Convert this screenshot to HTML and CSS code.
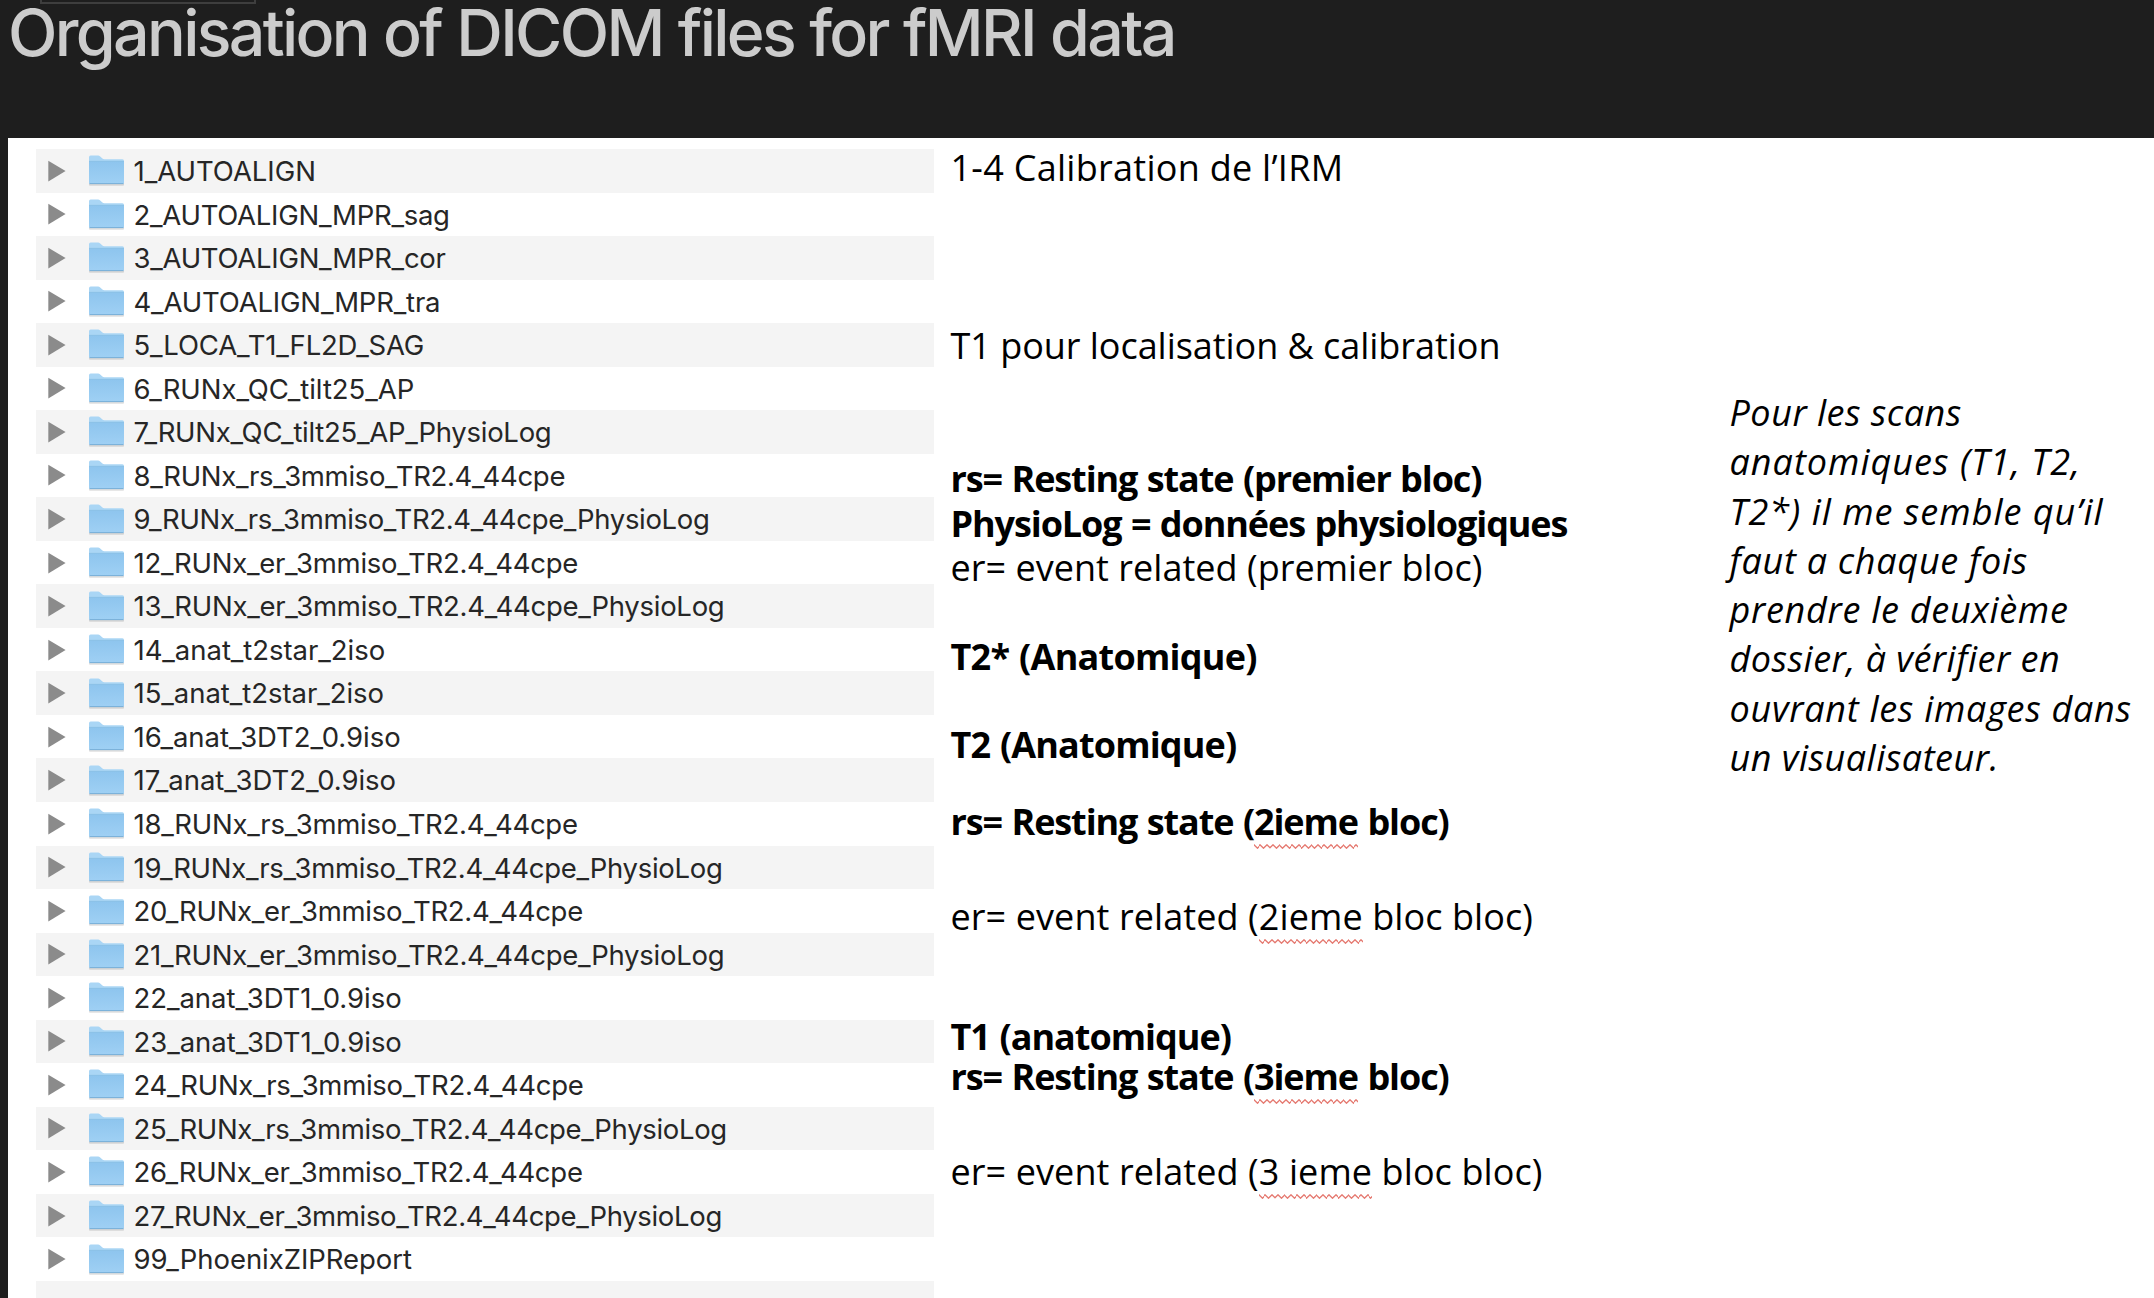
FILE: index.html
```
<!DOCTYPE html>
<html lang="fr">
<head>
<meta charset="utf-8">
<title>Organisation of DICOM files for fMRI data</title>
<link rel="stylesheet" href="styles.css">
</head>
<body>
<svg class="defs" width="0" height="0" aria-hidden="true">
  <defs>
    <linearGradient id="front" x1="0" y1="0" x2="0" y2="1">
      <stop offset="0" stop-color="#8ec5ee"/>
      <stop offset="1" stop-color="#9fd0f4"/>
    </linearGradient>
    <symbol id="arrow" viewBox="0 0 18 22"><path d="M.3.8 17.6 11 .3 21.4z" fill="#8b8b8b"/></symbol>
    <symbol id="folder" viewBox="0 0 37 33">
      <path d="M1 29.6h35v1.2a1 1 0 0 1-1 1H2a1 1 0 0 1-1-1z" fill="#000" opacity=".13"/>
      <path d="M1 3.2Q1 1.6 2.6 1.6H10q1.3 0 2.2.9l2.2 2.1q.8.7 2 .7H34.400q1.600 0 1.600 1.600V29H1z" fill="#aad6f5"/>
      <path d="M1 7.600h35V28.600q0 1.400-1.400 1.400H2.400Q1 30 1 28.600z" fill="url(#front)"/>
      <path d="M1 7.400h35" stroke="#86bce5" stroke-width=".8"/>
      <path d="M1.500 29.600h34" stroke="#79afd8" stroke-width="1"/>
    </symbol>
  </defs>
</svg>
<header class="header">
  <div class="tab-edge"></div>
  <h1 class="title">Organisation of DICOM files for fMRI data</h1>
</header>
<main class="slide">
  <ul class="files">
    <li class="file"><svg class="arrow"><use href="#arrow"/></svg><svg class="folder"><use href="#folder"/></svg><span class="name name--wide">1_AUTOALIGN</span></li>
    <li class="file"><svg class="arrow"><use href="#arrow"/></svg><svg class="folder"><use href="#folder"/></svg><span class="name">2_AUTOALIGN_MPR_sag</span></li>
    <li class="file"><svg class="arrow"><use href="#arrow"/></svg><svg class="folder"><use href="#folder"/></svg><span class="name">3_AUTOALIGN_MPR_cor</span></li>
    <li class="file"><svg class="arrow"><use href="#arrow"/></svg><svg class="folder"><use href="#folder"/></svg><span class="name name--medium">4_AUTOALIGN_MPR_tra</span></li>
    <li class="file"><svg class="arrow"><use href="#arrow"/></svg><svg class="folder"><use href="#folder"/></svg><span class="name name--medium">5_LOCA_T1_FL2D_SAG</span></li>
    <li class="file"><svg class="arrow"><use href="#arrow"/></svg><svg class="folder"><use href="#folder"/></svg><span class="name name--wide">6_RUNx_QC_tilt25_AP</span></li>
    <li class="file"><svg class="arrow"><use href="#arrow"/></svg><svg class="folder"><use href="#folder"/></svg><span class="name">7_RUNx_QC_tilt25_AP_PhysioLog</span></li>
    <li class="file"><svg class="arrow"><use href="#arrow"/></svg><svg class="folder"><use href="#folder"/></svg><span class="name name--tight">8_RUNx_rs_3mmiso_TR2.4_44cpe</span></li>
    <li class="file"><svg class="arrow"><use href="#arrow"/></svg><svg class="folder"><use href="#folder"/></svg><span class="name name--tight">9_RUNx_rs_3mmiso_TR2.4_44cpe_PhysioLog</span></li>
    <li class="file"><svg class="arrow"><use href="#arrow"/></svg><svg class="folder"><use href="#folder"/></svg><span class="name">12_RUNx_er_3mmiso_TR2.4_44cpe</span></li>
    <li class="file"><svg class="arrow"><use href="#arrow"/></svg><svg class="folder"><use href="#folder"/></svg><span class="name">13_RUNx_er_3mmiso_TR2.4_44cpe_PhysioLog</span></li>
    <li class="file"><svg class="arrow"><use href="#arrow"/></svg><svg class="folder"><use href="#folder"/></svg><span class="name name--wide">14_anat_t2star_2iso</span></li>
    <li class="file"><svg class="arrow"><use href="#arrow"/></svg><svg class="folder"><use href="#folder"/></svg><span class="name name--wide">15_anat_t2star_2iso</span></li>
    <li class="file"><svg class="arrow"><use href="#arrow"/></svg><svg class="folder"><use href="#folder"/></svg><span class="name name--wide">16_anat_3DT2_0.9iso</span></li>
    <li class="file"><svg class="arrow"><use href="#arrow"/></svg><svg class="folder"><use href="#folder"/></svg><span class="name name--wide">17_anat_3DT2_0.9iso</span></li>
    <li class="file"><svg class="arrow"><use href="#arrow"/></svg><svg class="folder"><use href="#folder"/></svg><span class="name">18_RUNx_rs_3mmiso_TR2.4_44cpe</span></li>
    <li class="file"><svg class="arrow"><use href="#arrow"/></svg><svg class="folder"><use href="#folder"/></svg><span class="name">19_RUNx_rs_3mmiso_TR2.4_44cpe_PhysioLog</span></li>
    <li class="file"><svg class="arrow"><use href="#arrow"/></svg><svg class="folder"><use href="#folder"/></svg><span class="name">20_RUNx_er_3mmiso_TR2.4_44cpe</span></li>
    <li class="file"><svg class="arrow"><use href="#arrow"/></svg><svg class="folder"><use href="#folder"/></svg><span class="name">21_RUNx_er_3mmiso_TR2.4_44cpe_PhysioLog</span></li>
    <li class="file"><svg class="arrow"><use href="#arrow"/></svg><svg class="folder"><use href="#folder"/></svg><span class="name name--wide">22_anat_3DT1_0.9iso</span></li>
    <li class="file"><svg class="arrow"><use href="#arrow"/></svg><svg class="folder"><use href="#folder"/></svg><span class="name name--wide">23_anat_3DT1_0.9iso</span></li>
    <li class="file"><svg class="arrow"><use href="#arrow"/></svg><svg class="folder"><use href="#folder"/></svg><span class="name">24_RUNx_rs_3mmiso_TR2.4_44cpe</span></li>
    <li class="file"><svg class="arrow"><use href="#arrow"/></svg><svg class="folder"><use href="#folder"/></svg><span class="name name--tight">25_RUNx_rs_3mmiso_TR2.4_44cpe_PhysioLog</span></li>
    <li class="file"><svg class="arrow"><use href="#arrow"/></svg><svg class="folder"><use href="#folder"/></svg><span class="name">26_RUNx_er_3mmiso_TR2.4_44cpe</span></li>
    <li class="file"><svg class="arrow"><use href="#arrow"/></svg><svg class="folder"><use href="#folder"/></svg><span class="name name--tight">27_RUNx_er_3mmiso_TR2.4_44cpe_PhysioLog</span></li>
    <li class="file"><svg class="arrow"><use href="#arrow"/></svg><svg class="folder"><use href="#folder"/></svg><span class="name name--wide">99_PhoenixZIPReport</span></li>
    <li class="file"></li>
  </ul>
  <div class="notes">
    <p class="note note--calibration">1-4 Calibration de l’IRM</p>
    <p class="note note--localiser">T1 pour localisation &amp; calibration</p>
    <p class="note note--bold note--rest1">rs= Resting state (premier bloc)</p>
    <p class="note note--bold note--physio">PhysioLog = données physiologiques</p>
    <p class="note note--event1">er= event related (premier bloc)</p>
    <p class="note note--bold note--t2star">T2* (Anatomique)</p>
    <p class="note note--bold note--t2">T2 (Anatomique)</p>
    <p class="note note--bold note--rest2">rs= Resting state (<span class="typo">2ieme</span> bloc)</p>
    <p class="note note--event">er= event related (<span class="typo">2ieme</span> bloc bloc)</p>
    <p class="note note--bold note--t1">T1 (anatomique)</p>
    <p class="note note--bold">rs= Resting state (<span class="typo">3ieme</span> bloc)</p>
    <p class="note note--event">er= event related (<span class="typo">3 ieme</span> bloc bloc)</p>
  </div>
  <aside class="remark">
    <span class="l1">Pour les scans</span><br>
    <span class="l2">anatomiques (T1, T2,</span><br>
    <span class="l2">T2*) il me semble qu’il</span><br>
    <span class="l3">faut a chaque fois</span><br>
    <span class="l3">prendre le deuxième</span><br>
    <span class="l1">dossier, à vérifier en</span><br>
    <span class="l3">ouvrant les images dans</span><br>
    <span class="l1">un visualisateur.</span>
  </aside>
</main>
</body>
</html>
```
FILE: styles.css
```
* { box-sizing: border-box; }

body {
  margin: 0;
  height: 1298px;
  overflow: hidden;
  display: flex;
  flex-direction: column;
  background: #1e1e1e;
}

.defs { position: absolute; }

.header {
  flex: none;
  height: 138px;
  padding-left: 8px;
}

.tab-edge {
  width: 216px;
  height: 4px;
  margin-left: 32px;
  border: 2px solid #3e3e3e;
  border-top: 0;
}

.title {
  margin: 0;
  font: 500 64.5px/58px Inter, sans-serif;
  letter-spacing: -2.68px;
  word-spacing: .6px;
  color: #ccc;
  white-space: nowrap;
}

.slide {
  flex: 1;
  min-height: 0;
  overflow: hidden;
  display: flex;
  align-items: flex-start;
  margin-left: 8px;
  background: #fff;
  color: #000;
}

.files {
  flex: none;
  width: 898px;
  margin: 11px 0 0 27.5px;
  padding: 0;
  list-style: none;
}

.file {
  display: flex;
  align-items: center;
  height: 43.54px;
  padding-left: 12px;
}

.file:nth-child(odd) { background: #f4f4f4; }

.arrow {
  width: 18px;
  height: 22px;
}

.folder {
  width: 37px;
  height: 33px;
  margin-left: 22.5px;
}

.name {
  margin-left: 8.5px;
  padding-top: 2px;
  font: 400 27.5px/43.54px Inter, sans-serif;
  letter-spacing: -.27px;
  color: #262626;
  white-space: nowrap;
}

.name--wide { letter-spacing: -.04px; }
.name--medium { letter-spacing: -.18px; }
.name--tight { letter-spacing: -.33px; }

.notes {
  flex: none;
  width: 796px;
  padding: 10px 0 0 17px;
}

.note {
  margin: 0;
  font: 400 36px/40px "Open Sans", sans-serif;
  letter-spacing: .06px;
  white-space: nowrap;
}

.note--bold {
  font-weight: 700;
  letter-spacing: -1.1px;
  word-spacing: 1.2px;
}

.note--calibration { letter-spacing: .28px; }
.note--localiser { margin-top: 138px; letter-spacing: -.04px; }
.note--rest1 { margin-top: 93px; }
.note--physio { margin-top: 5px; }
.note--event1 { margin-top: 4px; letter-spacing: .03px; }
.note--t2star { margin-top: 49px; letter-spacing: -.75px; }
.note--t2 { margin-top: 48px; letter-spacing: -.85px; }
.note--rest2 { margin-top: 37px; }
.note--event { margin-top: 55px; letter-spacing: .09px; }
.note--t1 { margin-top: 80px; letter-spacing: -1px; }

/* Spell-checker squiggle under a word */
.typo { position: relative; }

.typo::after {
  content: "";
  position: absolute;
  left: 0;
  right: 0;
  bottom: -3px;
  height: 5px;
  background: url("data:image/svg+xml,%3Csvg xmlns='http://www.w3.org/2000/svg' width='6.4' height='5' viewBox='0 0 6.4 5'%3E%3Cpath d='M-1.600 2.500 0 .8 3.200 4.200 6.400 .8 8 2.500' fill='none' stroke='%23e5786f' stroke-width='1.300'/%3E%3C/svg%3E") repeat-x;
}

.remark {
  flex: none;
  margin-top: 250px;
  font: italic 400 36px/49.3px "Open Sans", sans-serif;
  white-space: nowrap;
}

.l1 { letter-spacing: .5px; }
.l2 { letter-spacing: 1px; }
.l3 { letter-spacing: .72px; }
```
